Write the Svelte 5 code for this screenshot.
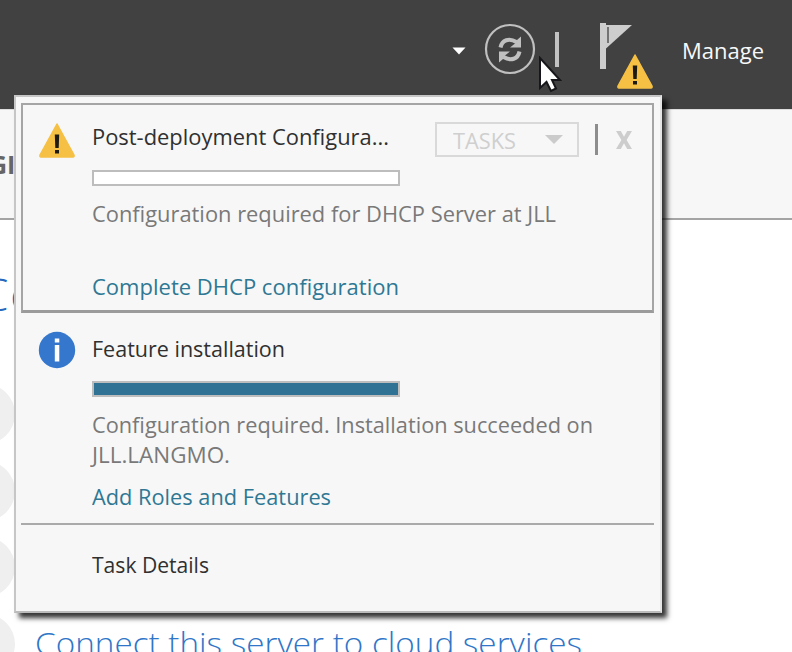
<script>
  // Condenses a line of text horizontally so that it occupies the given width.
  function fit(node, width) {
    const apply = () => {
      node.style.transform = 'none';
      const natural = node.getBoundingClientRect().width;
      if (natural) node.style.transform = `scaleX(${width / natural})`;
    };
    apply();
    document.fonts?.ready.then(apply);
  }
  const circles = [1, 2, 3, 4];
</script>

{#snippet warning()}
  <svg class="warn" viewBox="0 0 38 36" width="38" height="36">
    <path d="M19 2 L36 33 Q36.5 35 35 35 H3 Q1.500 35 2 33 Z" fill="#f6c044" stroke="#f6c044" stroke-width="1.5" stroke-linejoin="round" />
    <path d="M16.800 12.500 H21.200 L20.700 26 H17.300 Z M17 28 H21 V31.500 H17 Z" fill="#1d1a12" />
  </svg>
{/snippet}

<div class="app">
  <header>
    <svg class="caret" viewBox="0 0 14 8" width="14" height="8"><path d="M0.500 0.500 H13.500 L7 7.500 Z" fill="#fff" /></svg>
    <svg class="refresh" viewBox="0 0 52 52" width="52" height="52">
      <circle cx="26" cy="26" r="24" fill="none" stroke="#c0c0c0" stroke-width="2.200" />
      <g fill="none" stroke="#c0c0c0" stroke-width="4">
        <path d="M16.500 24.500 C18 17 25 14.500 32.500 19" />
        <path d="M35.500 28.500 C34 36 27 38.500 19.500 34" />
      </g>
      <path d="M37 13.500 V24.500 H26 L31 20.500 L33 17 Z M15 39.500 V28.500 H26 L21 32.500 L19 36 Z" fill="#c0c0c0" />
    </svg>
    <span class="bar"></span>
    <div class="flag">
      <svg viewBox="0 0 34 48" width="34" height="48">
        <path d="M0 0 H6 V46 H0 Z" fill="#cdcdcd" />
        <path d="M6 2 H32 L6 25.500 Z" fill="#cdcdcd" />
        <path d="M8 4 V20" stroke="#555" stroke-width="1.500" />
      </svg>
      <span class="badge">{@render warning()}</span>
    </div>
    <span class="manage"><span class="t" use:fit={82}>Manage</span></span>
  </header>
  <div class="band"><b>GI</b></div>
  <main>
    <div class="big">Co</div>
    <div class="circles">
      {#each circles as c (c)}<i></i>{/each}
    </div>
    <div class="connect"><span class="t" use:fit={547}>Connect this server to cloud services</span></div>
  </main>

  <section class="popup">
    <article class="card">
      <div class="icon">{@render warning()}</div>
      <div class="body">
        <div class="top">
          <div class="line title"><span class="t" use:fit={297}>Post-deployment Configura...</span></div>
          <button class="tasks"><span class="t" use:fit={63}>TASKS</span>
            <svg viewBox="0 0 18 9" width="18" height="9"><path d="M0 0 H18 L9 9 Z" fill="#cbcbcb" /></svg>
          </button>
          <span class="sep"></span>
          <svg class="close" viewBox="0 0 16 18" width="16" height="18"><path d="M0 0 H4.800 L8 5.800 L11.200 0 H16 L10.600 9 L16 18 H11.200 L8 12.200 L4.800 18 H0 L5.400 9 Z" fill="#cdcdcd" /></svg>
        </div>
        <div class="progress"></div>
        <div class="line grey"><span class="t" use:fit={464}>Configuration required for DHCP Server at JLL</span></div>
        <div class="line link complete"><span class="t" use:fit={307}>Complete DHCP configuration</span></div>
      </div>
    </article>
    <article class="feature">
      <div class="icon">
        <svg viewBox="0 0 38 38" width="38" height="38">
          <circle cx="19" cy="19" r="18.200" fill="#3477cd" />
          <path d="M16.800 7.500 H21.300 V11.500 H16.800 Z M16.800 14 H21.300 V30.500 H16.800 Z" fill="#fff" />
        </svg>
      </div>
      <div class="body">
        <div class="line title"><span class="t" use:fit={193}>Feature installation</span></div>
        <div class="progress full"></div>
        <div class="line grey"><span class="t" use:fit={501}>Configuration required. Installation succeeded on</span></div>
        <div class="line grey"><span class="t" use:fit={138}>JLL.LANGMO.</span></div>
        <div class="line link add"><span class="t" use:fit={239}>Add Roles and Features</span></div>
      </div>
    </article>
    <footer><div class="line title"><span class="t" use:fit={117}>Task Details</span></div></footer>
  </section>

  <svg class="cursor" viewBox="0 0 24 37" width="24" height="37">
    <path d="M2 2 V32 L8.500 26 L13 35 L18 32.500 L14 24 H22 Z" fill="#fff" stroke="#17171b" stroke-width="2" />
  </svg>
</div>

<style>
  .app {
    position: relative;
    width: 792px;
    height: 652px;
    overflow: hidden;
    background: #fff;
    font-family: 'Open Sans', 'Noto Sans', sans-serif;
    font-size: 22.5px;
    line-height: 32px;
  }
  .app * { box-sizing: border-box; }
  svg { display: block; flex: none; }
  .t { display: inline-block; white-space: pre; transform-origin: 0 50%; }
  header {
    height: 109px;
    background: #414141;
    display: flex;
    align-items: flex-start;
    padding-left: 452px;
  }
  .caret { margin-top: 47px; }
  .refresh { margin: 23px 0 0 18px; }
  .bar { width: 4px; height: 35px; margin: 32px 0 0 19px; background: #c2c2c2; }
  .flag { position: relative; width: 34px; margin: 23px 0 0 41px; }
  .badge { position: absolute; left: 16px; top: 30px; }
  .manage { margin: 35px 0 0 48px; width: 83px; color: #f8f8f8; }
  .band {
    height: 111px;
    background: #f7f7f7;
    border-top: 1px solid #ddd;
    border-bottom: 2px solid #a4a4a4;
    padding-top: 38px;
    color: #666;
  }
  .band b { display: block; margin-left: -11px; font-size: 25px; }
  main { height: 432px; }
  .big {
    height: 167px;
    padding: 44px 0 0;
    margin-left: -19px;
    font-size: 44px;
    line-height: 60px;
    letter-spacing: 2px;
    font-weight: 300;
    color: #2768bd;
  }
  .circles { display: flex; flex-direction: column; gap: 16.5px; height: 230px; margin-left: -45px; }
  .circles i { flex: none; width: 60px; height: 60px; border-radius: 50%; background: #efefef; transform: translateY(-3px); }
  .connect { margin: 6px 0 0 35px; font-size: 31px; line-height: 40px; font-weight: 300; color: #2f76c8; }
  .popup {
    position: absolute;
    left: 14px;
    top: 95px;
    width: 648px;
    height: 518px;
    padding: 6px 6px 0 5px;
    border: 2px solid #c6c6c6;
    border-right-color: #e4e4e4;
    border-bottom-color: #bbb;
    background: #f7f7f7;
    box-shadow: 5px 5px 5px 0 rgba(0, 0, 0, 0.8);
  }
  .card {
    height: 210px;
    border: 2px solid #a5a5a5;
    border-bottom: 3px solid #9b9b9b;
    display: flex;
    padding: 16px 0 0 15px;
  }
  .icon { width: 54px; flex: none; }
  .card .icon { padding-top: 1px; }
  .body { flex: 1; min-width: 0; }
  .line { height: 30px; white-space: nowrap; }
  .title { color: #303030; }
  .grey { color: #797979; }
  .link { color: #2f7894; }
  .top { display: flex; align-items: flex-start; height: 49px; }
  .top .title { width: 343px; flex: none; }
  .tasks {
    width: 144px;
    height: 35px;
    margin: 1px 0 0;
    padding: 0 14px 0 16px;
    display: flex;
    align-items: center;
    justify-content: space-between;
    border: 2px solid #d9d9d9;
    background: transparent;
    color: #cfcfcf;
    font: inherit;
  }
  .tasks .t { width: max-content; padding-top: 2px; }
  .tasks svg { margin-left: -20px; }
  .sep { width: 3px; height: 31px; margin: 3px 0 0 16px; background: #8d8d8d; }
  .close { margin: 10px 0 0 18px; }
  .progress { width: 308px; height: 16px; border: 2px solid #bdbdbd; background: #fff; margin-bottom: 12px; }
  .progress.full { background: #2f7293; }
  .complete { margin-top: 43px; }
  .feature { height: 212px; display: flex; padding: 18px 0 0 17px; border-bottom: 2px solid #aaa; }
  .feature .title { margin: 2px 0 18px; }
  .add { margin-top: 12px; }
  footer { padding: 24px 0 0 71px; }
  .cursor { position: absolute; left: 538px; top: 56px; }
</style>
